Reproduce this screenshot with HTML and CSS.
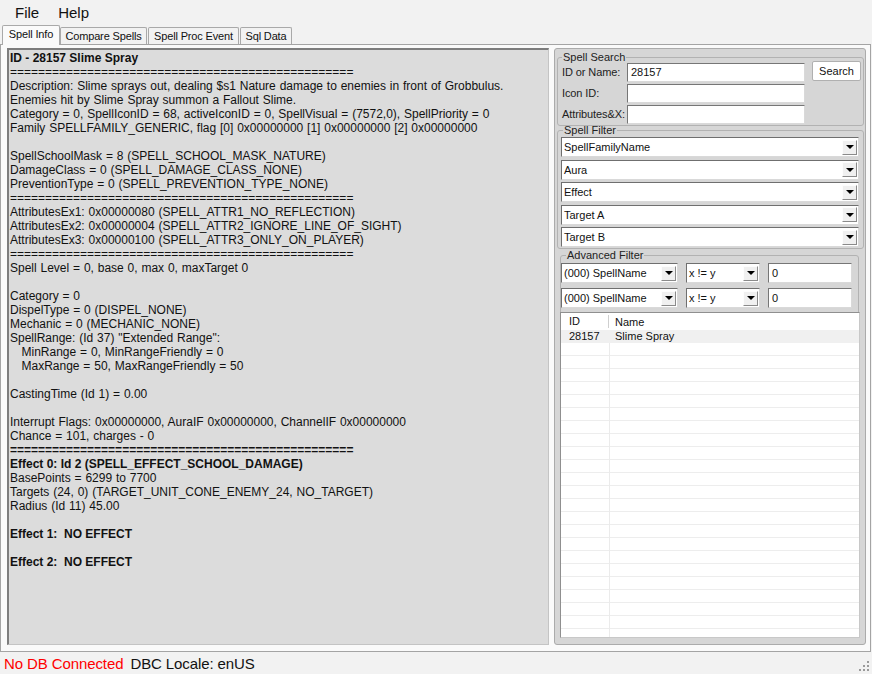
FILE: index.html
```html
<!DOCTYPE html>
<html>
<head>
<meta charset="utf-8">
<title>Spell Work</title>
<link rel="stylesheet" href="styles.css">
</head>
<body>
<div class="menubar"><span>File</span><span>Help</span></div>
<div class="tabs">
  <div class="tab active t1">Spell Info</div>
  <div class="tab t2">Compare Spells</div>
  <div class="tab t3">Spell Proc Event</div>
  <div class="tab t4">Sql Data</div>
</div>
<div class="page">
<pre class="info"><b>ID - 28157 Slime Spray</b>
=================================================
Description: Slime sprays out, dealing $s1 Nature damage to enemies in front of Grobbulus.
Enemies hit by Slime Spray summon a Fallout Slime.
Category = 0, SpellIconID = 68, activeIconID = 0, SpellVisual = (7572,0), SpellPriority = 0
Family SPELLFAMILY_GENERIC, flag [0] 0x00000000 [1] 0x00000000 [2] 0x00000000

SpellSchoolMask = 8 (SPELL_SCHOOL_MASK_NATURE)
DamageClass = 0 (SPELL_DAMAGE_CLASS_NONE)
PreventionType = 0 (SPELL_PREVENTION_TYPE_NONE)
=================================================
AttributesEx1: 0x00000080 (SPELL_ATTR1_NO_REFLECTION)
AttributesEx2: 0x00000004 (SPELL_ATTR2_IGNORE_LINE_OF_SIGHT)
AttributesEx3: 0x00000100 (SPELL_ATTR3_ONLY_ON_PLAYER)
=================================================
Spell Level = 0, base 0, max 0, maxTarget 0

Category = 0
DispelType = 0 (DISPEL_NONE)
Mechanic = 0 (MECHANIC_NONE)
SpellRange: (Id 37) "Extended Range":
   MinRange = 0, MinRangeFriendly = 0
   MaxRange = 50, MaxRangeFriendly = 50

CastingTime (Id 1) = 0.00

Interrupt Flags: 0x00000000, AuraIF 0x00000000, ChannelIF 0x00000000
Chance = 101, charges - 0
<b>=================================================</b>
<b>Effect 0: Id 2 (SPELL_EFFECT_SCHOOL_DAMAGE)</b>
BasePoints = 6299 to 7700
Targets (24, 0) (TARGET_UNIT_CONE_ENEMY_24, NO_TARGET)
Radius (Id 11) 45.00

<b>Effect 1:  NO EFFECT</b>

<b>Effect 2:  NO EFFECT</b>
</pre>
  <div class="panel">
    <fieldset class="grp search">
      <legend>Spell Search</legend>
      <div class="search-grid">
        <span class="lbl">ID or Name:</span>
        <div class="input">28157</div>
        <div class="btn">Search</div>
        <span class="lbl">Icon ID:</span>
        <div class="input"></div>
        <span></span>
        <span class="lbl">Attributes&amp;X:</span>
        <div class="input"></div>
      </div>
    </fieldset>
    <fieldset class="grp filter">
      <legend>Spell Filter</legend>
      <div class="combo"><span class="val">SpellFamilyName</span><span class="drop"></span></div>
      <div class="combo"><span class="val">Aura</span><span class="drop"></span></div>
      <div class="combo"><span class="val">Effect</span><span class="drop"></span></div>
      <div class="combo"><span class="val">Target A</span><span class="drop"></span></div>
      <div class="combo"><span class="val">Target B</span><span class="drop"></span></div>
    </fieldset>
    <fieldset class="grp adv">
      <legend>Advanced Filter</legend>
      <div class="adv-grid">
        <div class="combo"><span class="val">(000) SpellName</span><span class="drop"></span></div>
        <div class="combo"><span class="val">x != y</span><span class="drop"></span></div>
        <div class="input">0</div>
        <div class="combo"><span class="val">(000) SpellName</span><span class="drop"></span></div>
        <div class="combo"><span class="val">x != y</span><span class="drop"></span></div>
        <div class="input">0</div>
      </div>
    </fieldset>
    <div class="list">
      <div class="list-head"><span class="c1">ID</span><span class="c2">Name</span></div>
      <div class="rows">
        <div class="row"><span class="c1">28157</span><span class="c2">Slime Spray</span></div>
      </div>
    </div>
  </div>
</div>
<div class="status">
  <span class="err">No DB Connected</span>
  <span>DBC Locale: enUS</span>
  <svg class="grip" width="12" height="12" viewBox="0 0 12 12">
    <rect x="9" y="1" width="2" height="2" fill="#9a9a9a"/>
    <rect x="5" y="5" width="2" height="2" fill="#9a9a9a"/>
    <rect x="9" y="5" width="2" height="2" fill="#9a9a9a"/>
    <rect x="1" y="9" width="2" height="2" fill="#9a9a9a"/>
    <rect x="5" y="9" width="2" height="2" fill="#9a9a9a"/>
    <rect x="9" y="9" width="2" height="2" fill="#9a9a9a"/>
  </svg>
</div>
</body>
</html>
```
FILE: styles.css
```css
* { box-sizing: border-box; }
html, body { margin: 0; padding: 0; }
body {
  width: 872px;
  height: 674px;
  overflow: hidden;
  background: #f2f2f2;
  font-family: "Liberation Sans", Arial, sans-serif;
  color: #000;
  display: flex;
  flex-direction: column;
}
.menubar {
  height: 24px;
  display: flex;
  align-items: center;
  gap: 19px;
  padding-left: 15px;
  font-size: 15px;
  color: #111;
}
.tabs {
  height: 20px;
  display: flex;
  align-items: flex-end;
  padding-left: 2px;
}
.tab {
  height: 17px;
  border: 1px solid #a9a9a9;
  border-bottom: none;
  border-radius: 2px 2px 0 0;
  background: #f2f2f2;
  font-size: 11px;
  line-height: 16px;
  color: #111;
  text-align: center;
  white-space: nowrap;
  letter-spacing: -0.15px;
}
.tab.active {
  position: relative;
  height: 20px;
  margin-bottom: -1px;
  background: #fafafa;
  line-height: 17px;
}
.t1 { width: 58px; }
.t2 { width: 87px; }
.t3 { width: 91px; margin-left: 1px; }
.t4 { width: 52px; margin-left: 1px; }
.page {
  width: 871px;
  height: 608px;
  border: 1px solid #a4a4a4;
  background: #fafafa;
  padding: 3px 4px 6px 6px;
  display: flex;
  gap: 5px;
}
.info {
  width: 542px;
  margin: 0;
  background: #dcdcdc;
  border-style: solid;
  border-width: 2px 1px 1px 2px;
  border-color: #7d7d7d #c4c4c4 #c4c4c4 #7d7d7d;
  padding: 1px 1px;
  font-family: "Liberation Sans", Arial, sans-serif;
  font-size: 12px;
  line-height: 14px;
  word-spacing: 0.5px;
  color: #111;
  white-space: pre;
  overflow: hidden;
}
.info b { font-weight: bold; word-spacing: 0; }
.panel {
  width: 312px;
  background: #d6d6d6;
  border: 1px solid #ababab;
  border-radius: 3px;
  padding: 2px 1px 0 2px;
  display: flex;
  flex-direction: column;
}
.grp {
  margin: 0;
  min-width: 0;
  border: 1px solid #b2b2b2;
  border-radius: 3px;
}
.grp legend {
  font-size: 11px;
  line-height: 12px;
  padding: 0 1px;
  margin-left: 0;
  color: #222;
}
.search { padding: 0 2px 1px 4px; }
.search-grid {
  display: grid;
  grid-template-columns: 65px 178px 56px;
  grid-auto-rows: 19px;
  row-gap: 2px;
}
.lbl {
  font-size: 11px;
  line-height: 19px;
  color: #222;
  white-space: nowrap;
  letter-spacing: -0.1px;
}
.input {
  background: #fff;
  border-style: solid;
  border-width: 1px;
  border-color: #767676 #d9d9d9 #d9d9d9 #767676;
  font-size: 11px;
  line-height: 17px;
  padding-left: 3px;
  color: #111;
}
.btn {
  justify-self: end;
  align-self: start;
  width: 49px;
  height: 20px;
  margin-top: -2px;
  background: #fff;
  border: 1px solid #b0b0b0;
  border-radius: 2px;
  font-size: 11px;
  line-height: 18px;
  text-align: center;
  color: #111;
}
.filter {
  margin-top: -2px;
  padding: 1px 4px 1px 3px;
  display: flex;
  flex-direction: column;
  gap: 2.5px;
}
.filter legend { margin-left: 2px; }
.combo {
  height: 20px;
  display: flex;
  align-items: center;
  background: #fff;
  border-style: solid;
  border-width: 1px;
  border-color: #6f6f6f #d9d9d9 #d9d9d9 #6f6f6f;
}
.combo .val {
  flex: 1;
  min-width: 0;
  padding-left: 2px;
  font-size: 11px;
  color: #111;
  white-space: nowrap;
  overflow: hidden;
}
.drop {
  width: 15px;
  height: 15px;
  margin-right: 1px;
  background: #f0f0f0;
  border-style: solid;
  border-width: 1px;
  border-color: #fdfdfd #8a8a8a #8a8a8a #fdfdfd;
  display: flex;
  align-items: center;
  justify-content: center;
}
.drop::after {
  content: "";
  width: 0;
  height: 0;
  border-left: 4px solid transparent;
  border-right: 4px solid transparent;
  border-top: 4px solid #000;
}
.adv {
  margin: 0 5px 0 3px;
  padding: 2px 0 12px 0;
}
.adv legend { margin-left: 5px; }
.adv-grid {
  display: grid;
  grid-template-columns: 117px 74px 84px;
  column-gap: 8px;
  row-gap: 5px;
  grid-auto-rows: 20px;
}
.adv-grid .input { line-height: 18px; }
.list {
  width: 300px;
  height: 326px;
  margin: -9px 0 0 3px;
  background: #fff;
  border-style: solid;
  border-width: 1px;
  border-color: #8f8f8f #c8c8c8 #c8c8c8 #8f8f8f;
  display: flex;
  flex-direction: column;
}
.list-head {
  height: 17px;
  display: flex;
  align-items: center;
  font-size: 11px;
  color: #111;
}
.list-head .c1 {
  width: 48px;
  padding-left: 8px;
  border-right: 1px solid #cfcfcf;
  line-height: 13px;
}
.list-head .c2 { padding-left: 6px; }
.rows {
  flex: 1;
  background:
    linear-gradient(to right, transparent 0 48px, #ebebeb 48px 49px, transparent 49px),
    repeating-linear-gradient(to bottom, transparent 0 12px, #ededed 12px 13px);
}
.row {
  height: 13px;
  display: flex;
  background: #f0f0f0;
  font-size: 11px;
  line-height: 13px;
  color: #111;
}
.row .c1 { width: 48px; padding-left: 8px; }
.row .c2 { padding-left: 6px; }
.status {
  height: 22px;
  display: flex;
  align-items: center;
  gap: 7px;
  padding-left: 4px;
  font-size: 15px;
  letter-spacing: -0.1px;
  color: #111;
}
.status .err { color: #ff0000; }
.grip {
  margin-left: auto;
  align-self: flex-end;
  margin-right: 2px;
  margin-bottom: 2px;
}
```
